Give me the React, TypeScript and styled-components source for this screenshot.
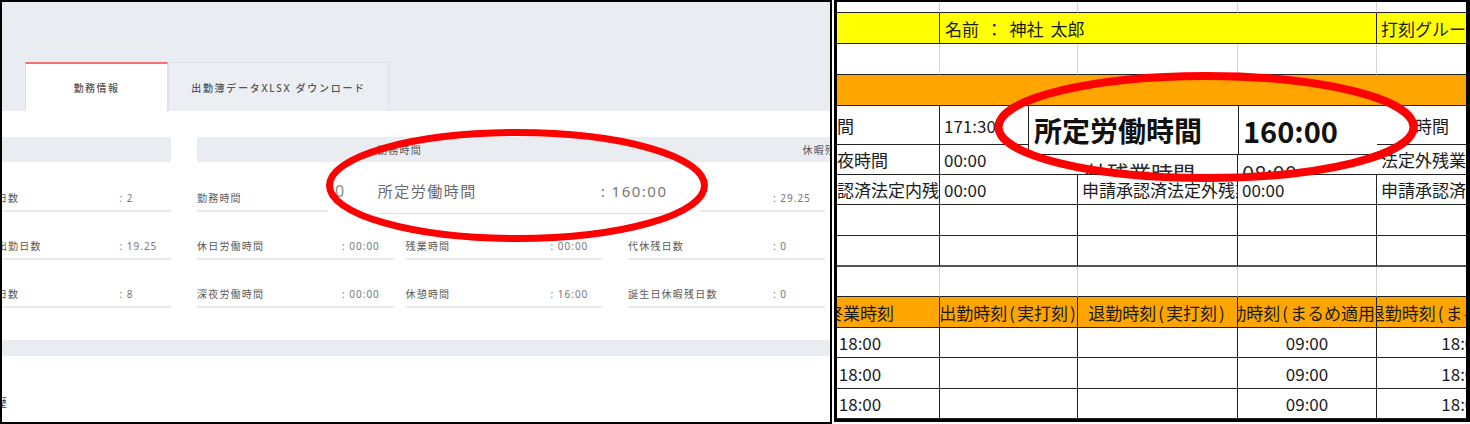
import React from "react";
import styled, { createGlobalStyle } from "styled-components";

const GlobalStyle = createGlobalStyle`
  * { box-sizing: border-box; }
  html, body { margin: 0; padding: 0; background: #fff; }
  body { width: 1470px; height: 424px; overflow: hidden; font-family: "Noto Sans", "Noto Sans CJK JP", sans-serif; }
  #root { width: 1470px; height: 424px; }
`;

const Frame = styled.div`
  display: flex;
  align-items: flex-start;
  gap: 2px;
  width: 1470px;
  height: 424px;
  background: #fff;
`;

/* ---------------- Left: web UI ---------------- */

const LeftPanel = styled.section`
  position: relative;
  flex-shrink: 0;
  width: 832px;
  height: 424px;
  border: 2px solid #000;
  overflow: hidden;
  background: #fff;
  font-family: "Noto Sans", "Noto Sans CJK JP", sans-serif;
`;

const TopArea = styled.div`
  height: 109px;
  background: #e9edf1;
  display: flex;
  align-items: flex-end;
  padding-left: 23px;
`;

const Tab = styled.div<{ $active?: boolean; $w: number }>`
  width: ${(p) => p.$w}px;
  height: 49px;
  display: flex;
  align-items: center;
  justify-content: center;
  font-size: 10px;
  font-weight: 500;
  letter-spacing: ${(p) => (p.$active ? 1.4 : 1.7)}px;
  color: #555;
  white-space: nowrap;
  background: ${(p) => (p.$active ? "#fff" : "#ebeef2")};
  border: 1px solid #dde2e9;
  border-bottom: none;
  border-top: ${(p) => (p.$active ? "2px solid #f07272" : "1px solid #dde2e9")};
`;

const Body = styled.div`
  padding-top: 26px;
`;

const Sections = styled.div`
  display: flex;
  gap: 26px;
  margin-left: -236px;
`;

const Section = styled.div`
  width: 405px;
  flex-shrink: 0;
`;

const SectionHead = styled.div<{ $join?: boolean }>`
  height: 25px;
  margin-right: ${(p) => (p.$join ? -26 : 0)}px;
  padding-right: ${(p) => (p.$join ? 26 : 0)}px;
  background: #e9edf1;
  display: flex;
  align-items: center;
  justify-content: center;
  font-size: 10px;
  letter-spacing: 1.2px;
  color: #555;
`;

const InfoGrid = styled.div`
  display: grid;
  grid-template-columns: 1fr 1fr;
  column-gap: 12px;
  margin-top: 2px;
`;

const InfoRow = styled.div`
  height: 48px;
  border-bottom: 2px solid #e9e9e9;
  display: flex;
  align-items: flex-end;
  padding-bottom: 6px;
  font-size: 10px;
  line-height: 12px;
`;

const Label = styled.span`
  width: 145px;
  flex-shrink: 0;
  color: #5a5a5a;
  letter-spacing: 1.2px;
  white-space: nowrap;
`;

const Value = styled.span`
  color: #777;
  letter-spacing: 1px;
  white-space: nowrap;
`;

const BottomBar = styled.div`
  margin-top: 32px;
  height: 16px;
  background: #e9edf1;
`;

const SubTitle = styled.div`
  margin-top: 38px;
  margin-left: -42px;
  font-size: 11px;
  line-height: 18px;
  letter-spacing: 1px;
  color: #444;
  white-space: nowrap;
`;

const Callout = styled.div`
  position: absolute;
  left: 326px;
  top: 162px;
  width: 372px;
  height: 58px;
  background: #fff;
  display: flex;
  align-items: flex-start;
  padding-left: 7px;
`;

const CalloutCell = styled.div<{ $line?: boolean; $w?: number; $ml?: number }>`
  height: 50px;
  display: flex;
  align-items: flex-end;
  padding-bottom: ${(p) => (p.$line ? 12 : 13)}px;
  margin-left: ${(p) => p.$ml ?? 0}px;
  width: ${(p) => (p.$w ? `${p.$w}px` : "auto")};
  border-bottom: ${(p) => (p.$line ? "1px solid #dedede" : "none")};
  font-size: 15px;
  line-height: 20px;
  white-space: nowrap;
`;

const CalloutLabel = styled.span`
  width: 223px;
  flex-shrink: 0;
  color: #6a6a6a;
  letter-spacing: 1.5px;
`;

const CalloutValue = styled.span<{ $big?: boolean }>`
  color: ${(p) => (p.$big ? "#8a8a8a" : "#777")};
  font-size: ${(p) => (p.$big ? 16 : 15)}px;
  letter-spacing: 1.5px;
`;

const Overlay = styled.svg`
  position: absolute;
  pointer-events: none;
`;

/* ---------------- Right: spreadsheet ---------------- */

const RightPanel = styled.section`
  position: relative;
  flex-shrink: 0;
  width: 636px;
  height: 422px;
  border-style: solid;
  border-color: #000;
  border-width: 2px 4px 3px 3px;
  overflow: hidden;
  background: #fff;
`;

const COLS = "159px 138px 160px 139px 172px";

const Sheet = styled.div`
  display: flex;
  flex-direction: column;
  width: 768px;
  margin-left: -56px;
  font-family: "Noto Sans CJK JP", "Noto Sans", sans-serif;
  font-size: 17px;
  color: #1b1b1b;
  word-spacing: 3px;
`;

const SheetRow = styled.div<{ $h: number }>`
  display: grid;
  grid-template-columns: ${COLS};
  height: ${(p) => p.$h}px;
  flex-shrink: 0;
`;

type CellProps = {
  $bg?: string;
  $v?: string;
  $b?: string;
  $bw?: number;
  $span?: number;
  $center?: boolean;
  $pad?: number;
};

const Cell = styled.div<CellProps>`
  grid-column: span ${(p) => p.$span ?? 1};
  background: ${(p) => p.$bg ?? "#fff"};
  border-right: 1px solid ${(p) => p.$v ?? "transparent"};
  border-bottom: ${(p) => p.$bw ?? 1}px solid ${(p) => p.$b ?? "#d4d4d4"};
  display: flex;
  align-items: center;
  justify-content: ${(p) => (p.$center ? "center" : "flex-start")};
  padding-left: ${(p) => (p.$center ? 0 : p.$pad ?? 4)}px;
  overflow: hidden;
  white-space: nowrap;
  line-height: 1;
`;

const Txt = styled.span`
  flex-shrink: 0;
`;

const Paren = styled.span`
  padding: 0 2px;
`;

const XCallout = styled.div`
  position: absolute;
  left: 191px;
  top: 104px;
  width: 349px;
  font-family: "Noto Sans CJK JP", "Noto Sans", sans-serif;
  color: #111;
`;

const XMain = styled.div`
  display: grid;
  grid-template-columns: 210px 139px;
  height: 49px;
  background: #fff;
  border-left: 1px solid #222;
  border-bottom: 1px solid #222;
`;

const XBig = styled.div<{ $div?: boolean; $size: number }>`
  display: flex;
  align-items: center;
  padding-left: ${(p) => (p.$div ? 5 : 4)}px;
  border-right: ${(p) => (p.$div ? "1px solid #222" : "none")};
  font-size: ${(p) => p.$size}px;
  font-weight: 700;
  line-height: 1;
  white-space: nowrap;
  overflow: visible;
`;

const XSub = styled.div`
  display: grid;
  grid-template-columns: 161px 139px;
  height: 19px;
  margin-left: 49px;
  background: #fff;
  overflow: hidden;
`;

const XSubCell = styled.div<{ $div?: boolean; $pad: number }>`
  padding-top: 6px;
  padding-left: ${(p) => p.$pad}px;
  border-right: ${(p) => (p.$div ? "1px solid #222" : "none")};
  font-size: 22px;
  line-height: 22px;
  color: #2a2a2a;
  white-space: nowrap;
  overflow: hidden;
`;

const K = "#222";
const G = "#d4d4d4";
const Y = "#ffff00";
const O = "#ffa500";

type Info = [string, string];

const sections: { head: string; join?: boolean; left: Info[]; right: Info[] }[] = [
  {
    head: "日数",
    left: [
      ["出勤日数", ": 20"],
      ["所定日数", ": 20"],
      ["遅刻回数", ": 0"],
    ],
    right: [
      ["欠勤日数", ": 2"],
      ["今月出勤日数", ": 19.25"],
      ["有給日数", ": 8"],
    ],
  },
  {
    head: "勤務時間",
    join: true,
    left: [
      ["勤務時間", ": 171:30"],
      ["休日労働時間", ": 00:00"],
      ["深夜労働時間", ": 00:00"],
    ],
    right: [
      ["所定労働時間", ": 160:00"],
      ["残業時間", ": 00:00"],
      ["休憩時間", ": 16:00"],
    ],
  },
  {
    head: "休暇残日数",
    left: [
      ["有給残日数", ": 29.25"],
      ["代休残日数", ": 0"],
      ["誕生日休暇残日数", ": 0"],
    ],
    right: [
      ["振休残日数", ": 0"],
      ["特別休暇残日数", ": 0"],
      ["夏季休暇残日数", ": 0"],
    ],
  },
];

const withParens = (a: string, b: string) => (
  <Txt>
    {a}
    <Paren>(</Paren>
    {b}
    <Paren>)</Paren>
  </Txt>
);

export default function App() {
  return (
    <>
      <GlobalStyle />
      <Frame>
        <LeftPanel>
          <TopArea>
            <Tab $active $w={143}>勤務情報</Tab>
            <Tab $w={221}>出勤簿データXLSX ダウンロード</Tab>
          </TopArea>
          <Body>
            <Sections>
              {sections.map((s) => (
                <Section key={s.head}>
                  <SectionHead $join={s.join}>{s.head}</SectionHead>
                  <InfoGrid>
                    {[0, 1, 2].map((i) => (
                      <React.Fragment key={i}>
                        <InfoRow>
                          <Label>{s.left[i][0]}</Label>
                          <Value>{s.left[i][1]}</Value>
                        </InfoRow>
                        <InfoRow>
                          <Label>{s.right[i][0]}</Label>
                          <Value>{s.right[i][1]}</Value>
                        </InfoRow>
                      </React.Fragment>
                    ))}
                  </InfoGrid>
                </Section>
              ))}
            </Sections>
            <BottomBar />
            <SubTitle>申請履歴</SubTitle>
          </Body>

          <Callout>
            <CalloutCell>
              <CalloutValue $big>0</CalloutValue>
            </CalloutCell>
            <CalloutCell $line $w={304} $ml={32}>
              <CalloutLabel>所定労働時間</CalloutLabel>
              <CalloutValue>: 160:00</CalloutValue>
            </CalloutCell>
          </Callout>

          <Overlay style={{ left: -2, top: -2 }} width={832} height={424} viewBox="0 0 832 424">
            <ellipse cx={517} cy={185.5} rx={187.5} ry={53} fill="none" stroke="#ff0000" strokeWidth={7} />
          </Overlay>
        </LeftPanel>

        <RightPanel>
          <Sheet>
            <SheetRow $h={11}>
              <Cell $v={G} $b={K} />
              <Cell $v={G} $b={K} />
              <Cell $v={G} $b={K} />
              <Cell $v={G} $b={K} />
              <Cell $b={K} />
            </SheetRow>
            <SheetRow $h={31}>
              <Cell $bg={Y} $v={K} $b={K} />
              <Cell $bg={Y} $v={K} $b={K} $span={3} $pad={5}>
                <Txt>名前 ： 神社 太郎</Txt>
              </Cell>
              <Cell $bg={Y} $b={K}>
                <Txt>打刻グループ：Aグループ</Txt>
              </Cell>
            </SheetRow>
            <SheetRow $h={31}>
              <Cell $v={G} $b={K} />
              <Cell $v={G} $b={K} />
              <Cell $v={G} $b={K} />
              <Cell $v={G} $b={K} />
              <Cell $b={K} />
            </SheetRow>
            <SheetRow $h={31}>
              <Cell $bg={O} $b={K} $span={5} />
            </SheetRow>
            <SheetRow $h={39}>
              <Cell $v={K} $b={K} $pad={5}>実働時間</Cell>
              <Cell $v={K} $b={K}>171:30</Cell>
              <Cell $v={K} $b={K}>所定労働時間</Cell>
              <Cell $v={K} $b={K}>160:00</Cell>
              <Cell $b={K} $pad={38}>時間</Cell>
            </SheetRow>
            <SheetRow $h={30}>
              <Cell $v={K} $b={K} $pad={5}>休日深夜時間</Cell>
              <Cell $v={K} $b={K}>00:00</Cell>
              <Cell $v={K} $b={K}>法定外残業時間</Cell>
              <Cell $v={K} $b={K}>08:00</Cell>
              <Cell $b={K}>法定外残業時間</Cell>
            </SheetRow>
            <SheetRow $h={30}>
              <Cell $v={K} $b={K} $pad={5}>申請承認済法定内残業時間</Cell>
              <Cell $v={K} $b={K}>00:00</Cell>
              <Cell $v={K} $b={K}>申請承認済法定外残業時間</Cell>
              <Cell $v={K} $b={K}>00:00</Cell>
              <Cell $b={K}>申請承認済法定外残業時間</Cell>
            </SheetRow>
            <SheetRow $h={31}>
              <Cell $v={K} $b={K} />
              <Cell $v={K} $b={K} />
              <Cell $v={K} $b={K} />
              <Cell $v={K} $b={K} />
              <Cell $b={K} />
            </SheetRow>
            <SheetRow $h={31}>
              <Cell $v={K} $b="#555" $bw={2} />
              <Cell $v={K} $b="#555" $bw={2} />
              <Cell $v={K} $b="#555" $bw={2} />
              <Cell $v={K} $b="#555" $bw={2} />
              <Cell $b="#555" $bw={2} />
            </SheetRow>
            <SheetRow $h={30}>
              <Cell $v={G} $b={K} />
              <Cell $v={G} $b={K} />
              <Cell $v={G} $b={K} />
              <Cell $v={G} $b={K} />
              <Cell $b={K} />
            </SheetRow>
            <SheetRow $h={31}>
              <Cell $bg={O} $v={K} $b={K} $center>
                <Txt>終業時刻</Txt>
              </Cell>
              <Cell $bg={O} $v={K} $b={K} $center>
                {withParens("出勤時刻", "実打刻")}
              </Cell>
              <Cell $bg={O} $v={K} $b={K} $center>
                {withParens("退勤時刻", "実打刻")}
              </Cell>
              <Cell $bg={O} $v={K} $b={K} $center>
                {withParens("出勤時刻", "まるめ適用後")}
              </Cell>
              <Cell $bg={O} $b={K} $center>
                {withParens("退勤時刻", "まるめ適用後")}
              </Cell>
            </SheetRow>
            {[30, 31, 30].map((h, i) => (
              <SheetRow $h={h} key={i}>
                <Cell $v={K} $b={K} $center>
                  <Txt>18:00</Txt>
                </Cell>
                <Cell $v={K} $b={K} />
                <Cell $v={K} $b={K} />
                <Cell $v={K} $b={K} $center>
                  <Txt>09:00</Txt>
                </Cell>
                <Cell $b={K} $center>
                  <Txt>18:00</Txt>
                </Cell>
              </SheetRow>
            ))}
          </Sheet>

          <XCallout>
            <XMain>
              <XBig $div $size={28}>所定労働時間</XBig>
              <XBig $size={29}>160:00</XBig>
            </XMain>
            <XSub>
              <XSubCell $div $pad={8}>外残業時間</XSubCell>
              <XSubCell $pad={4}>08:00</XSubCell>
            </XSub>
          </XCallout>

          <Overlay style={{ left: -3, top: -2 }} width={636} height={422} viewBox="834 0 636 422">
            <ellipse cx={1206} cy={127} rx={207.5} ry={51} fill="none" stroke="#ff0000" strokeWidth={8} />
          </Overlay>
        </RightPanel>
      </Frame>
    </>
  );
}
